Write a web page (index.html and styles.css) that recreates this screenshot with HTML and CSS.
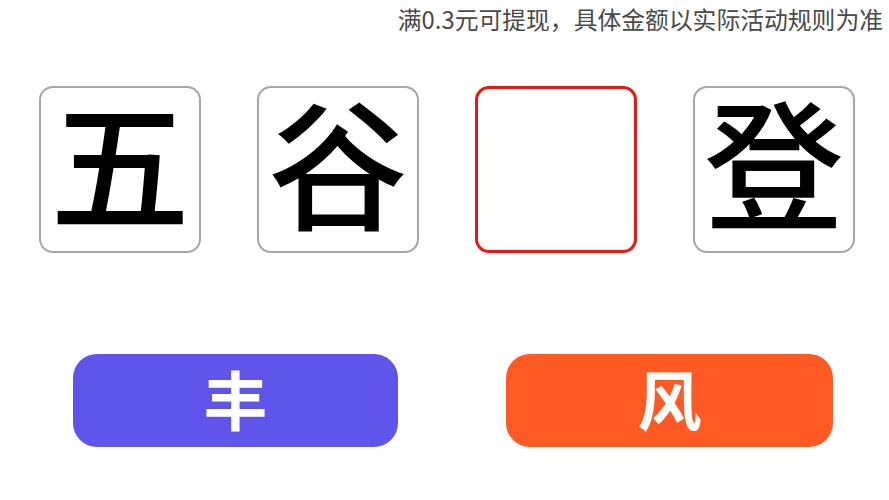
FILE: index.html
```html
<!DOCTYPE html>
<html lang="zh">
<head>
<meta charset="utf-8">
<link rel="stylesheet" href="styles.css">
</head>
<body>
<div class="page">
  <div class="notice">满0.3元可提现，具体金额以实际活动规则为准</div>
  <div class="cells">
    <div class="cell">五</div>
    <div class="cell">谷</div>
    <div class="cell cell-empty"></div>
    <div class="cell">登</div>
  </div>
  <div class="options">
    <div class="option option-purple">丰</div>
    <div class="option option-orange">风</div>
  </div>
</div>
</body>
</html>
```
FILE: styles.css
```css
html, body {
  margin: 0;
  padding: 0;
  background: #ffffff;
}
body {
  font-family: "Noto Sans CJK SC", "Noto Sans", sans-serif;
  width: 889px;
  height: 500px;
  overflow: hidden;
}
.page {
  display: flex;
  flex-direction: column;
}
.notice {
  display: flex;
  justify-content: flex-end;
  padding-right: 6px;
  height: 40px;
  line-height: 40px;
  margin-top: -1px;
  font-size: 23.8px;
  font-weight: 400;
  color: #4a4a4a;
  white-space: nowrap;
}
.cells {
  display: flex;
  gap: 56px;
  padding-left: 39px;
  margin-top: 47px;
}
.cell {
  box-sizing: border-box;
  width: 162px;
  height: 167px;
  padding-bottom: 24px;
  border: 2px solid #a6a6a6;
  border-radius: 14px;
  display: flex;
  align-items: center;
  justify-content: center;
  font-size: 140px;
  font-weight: 500;
  color: #000000;
  line-height: 1;
}
.cell-empty {
  border: 3px solid #f21414;
}
.options {
  display: flex;
  gap: 108px;
  padding-left: 73px;
  margin-top: 101px;
}
.option {
  box-sizing: border-box;
  width: 325px;
  height: 93px;
  padding-bottom: 7px;
  border-radius: 24px;
  display: flex;
  align-items: center;
  justify-content: center;
  font-size: 64px;
  font-weight: 700;
  color: #ffffff;
  line-height: 1;
}
.option-purple {
  background: #6055ea;
}
.option-orange {
  background: #ff5a24;
  width: 327px;
}
```
